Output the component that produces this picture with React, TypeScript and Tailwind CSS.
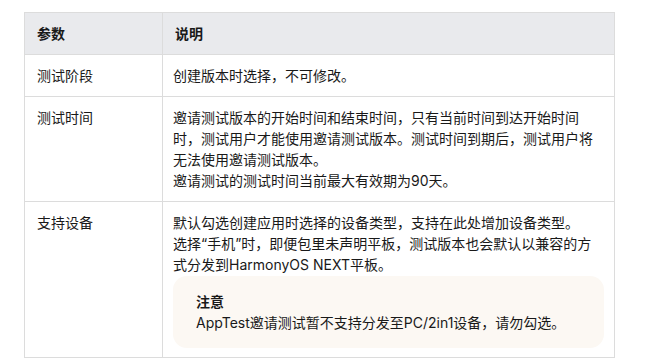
const font = { fontFamily: "Inter, 'Noto Sans CJK SC', sans-serif" };

export default function App() {
  return (
    <div className="w-[652px] h-[363px] bg-white pl-[24px] pt-[12px] text-[14px] leading-[21px] text-[#191919]" style={font}>
      <table className="w-[591px] border-collapse table-fixed">
        <colgroup>
          <col className="w-[138px]" />
          <col />
        </colgroup>
        <thead>
          <tr className="bg-[#e9eaed]">
            <th className="border border-[#dcdcdc] px-3 py-[10px] text-left font-bold">参数</th>
            <th className="border border-[#dcdcdc] px-3 py-[10px] text-left font-bold">说明</th>
          </tr>
        </thead>
        <tbody>
          <tr>
            <td className="border border-[#dcdcdc] px-3 py-[10px] align-top">测试阶段</td>
            <td className="border border-[#dcdcdc] px-[10px] py-[10px] align-top">创建版本时选择，不可修改。</td>
          </tr>
          <tr>
            <td className="border border-[#dcdcdc] px-3 py-[10px] align-top">测试时间</td>
            <td className="border border-[#dcdcdc] px-[10px] py-[10px] align-top">
              邀请测试版本的开始时间和结束时间，只有当前时间到达开始时间
              <br />
              时，测试用户才能使用邀请测试版本。测试时间到期后，测试用户将
              <br />
              无法使用邀请测试版本。
              <br />
              邀请测试的测试时间当前最大有效期为90天。
            </td>
          </tr>
          <tr>
            <td className="border border-[#dcdcdc] px-3 py-[10px] align-top">支持设备</td>
            <td className="border border-[#dcdcdc] px-[10px] pt-[10px] pb-[9px] align-top">
              <p>默认勾选创建应用时选择的设备类型，支持在此处增加设备类型。</p>
              <p>
                选择“手机”时，即便包里未声明平板，测试版本也会默认以兼容的方
                <br />
                式分发到HarmonyOS NEXT平板。
              </p>
              <div className="mt-[1px] rounded-[14px] bg-[#fcf8f3] px-[23px] py-[15px]">
                <div className="font-bold">注意</div>
                <div>AppTest邀请测试暂不支持分发至PC/2in1设备，请勿勾选。</div>
              </div>
            </td>
          </tr>
        </tbody>
      </table>
    </div>
  );
}
